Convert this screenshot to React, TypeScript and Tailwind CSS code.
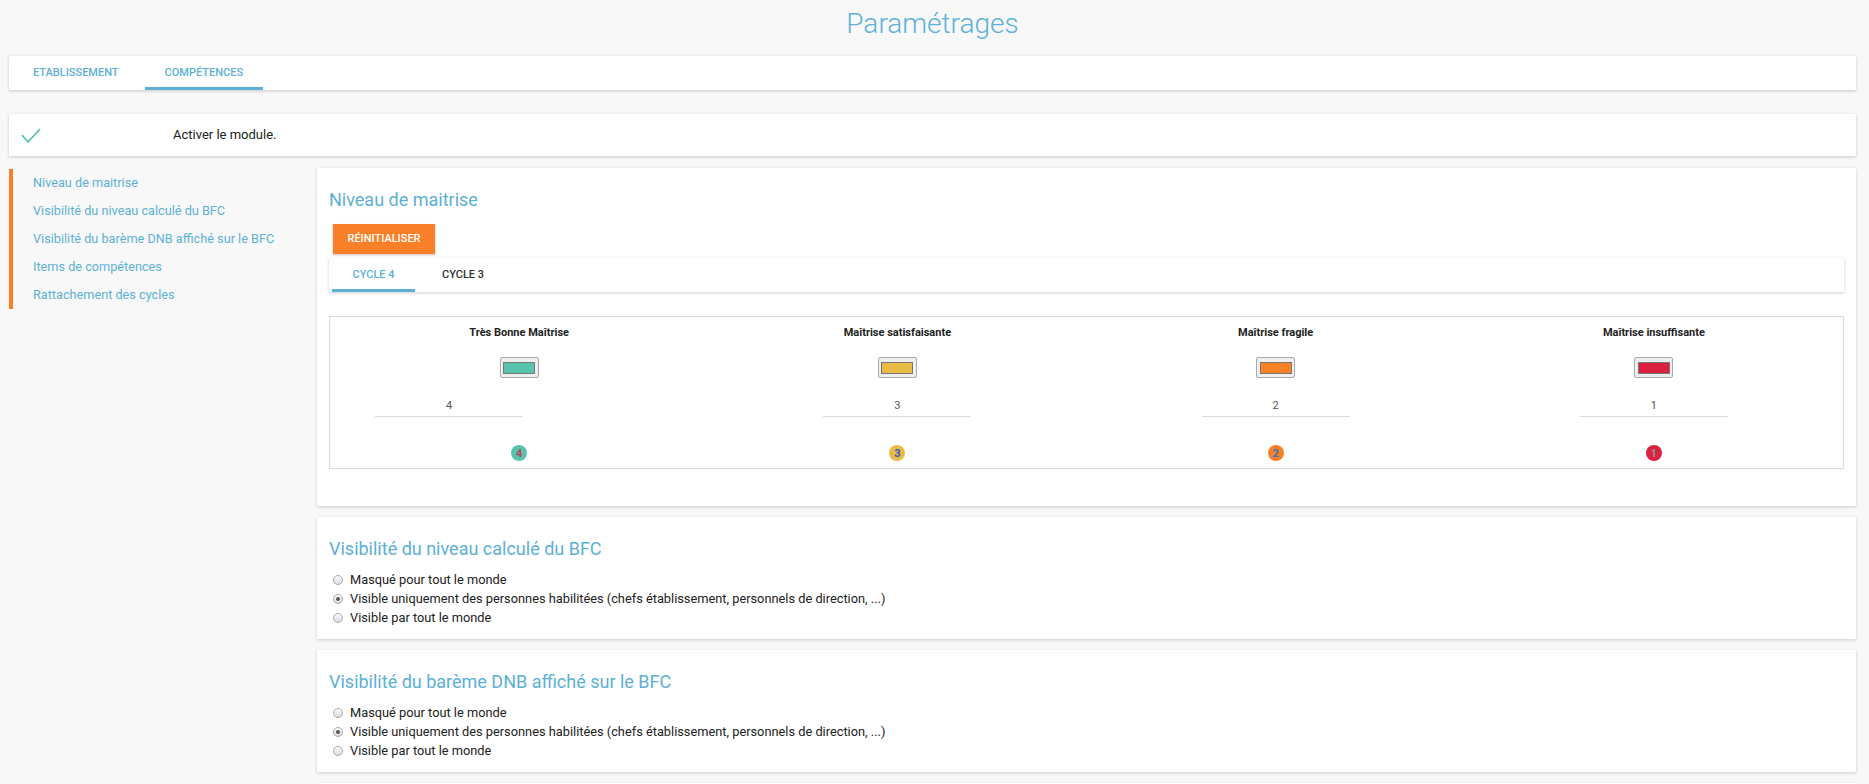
import React from 'react';

const levels = [
  { label: 'Très Bonne Maîtrise', color: '#57c4ad', value: '4', text: '#c2425a', shift: true },
  { label: 'Maîtrise satisfaisante', color: '#e8bb45', value: '3', text: '#2e57c8', shift: false },
  { label: 'Maîtrise fragile', color: '#f98024', value: '2', text: '#2c77d4', shift: false },
  { label: 'Maîtrise insuffisante', color: '#dc2140', value: '1', text: '#7c9c92', shift: false },
];

const options = [
  'Masqué pour tout le monde',
  'Visible uniquement des personnes habilitées (chefs établissement, personnels de direction, ...)',
  'Visible par tout le monde',
];

const Radio: React.FC<{ checked?: boolean; label: string }> = ({ checked, label }) => (
  <label className="flex items-center gap-[7px] leading-[19px] text-[12.8px] text-[#222]">
    <span className="ml-[4px] w-[10px] h-[10px] rounded-full border border-[#a8a8a8] bg-gradient-to-b from-[#fdfdfd] to-[#dcdcdc] flex items-center justify-center">
      {checked && <span className="w-[4px] h-[4px] rounded-full bg-[#555]" />}
    </span>
    {label}
  </label>
);

const VisibilityCard: React.FC<{ title: string }> = ({ title }) => (
  <section className="bg-white shadow-[0_1px_3px_rgba(0,0,0,0.18)] pt-[19px] pb-[12px] px-3">
    <h2 className="text-[18px] leading-[26px] text-[#5cb0d6]">{title}</h2>
    <div className="mt-[8px] flex flex-col">
      {options.map((o, i) => (
        <Radio key={o} label={o} checked={i === 1} />
      ))}
    </div>
  </section>
);

export default function App() {
  return (
    <div className="min-h-screen bg-[#f8f8f8] pl-[9px] pr-[13px] font-['Roboto',sans-serif]">
      <h1 className="h-[56px] pt-[4px] text-center text-[28px] leading-[40px] font-light text-[#5cb1d8]">
        Paramétrages
      </h1>

      {/* Top tabs */}
      <nav className="h-[34px] bg-white shadow-[0_1px_3px_rgba(0,0,0,0.2)] flex text-[11px] font-medium text-[#5cb0d6] uppercase">
        <a href="#" className="pl-[24px] pr-[26px] flex items-center">Etablissement</a>
        <a href="#" className="px-[20px] flex items-center border-b-[3px] border-[#5cb0d6] pt-[3px]">Compétences</a>
      </nav>

      {/* Module activation */}
      <div className="mt-[24px] h-[42px] bg-white shadow-[0_1px_3px_rgba(0,0,0,0.2)] flex items-center">
        <div className="w-[154px] pl-[12px] shrink-0">
          <svg width="20" height="15" viewBox="0 0 20 15" fill="none">
            <polyline points="1,7 7,14 19,1" stroke="#4fc1a6" strokeWidth="1.6" />
          </svg>
        </div>
        <span className="pl-[10px] text-[13px] text-[#222]">Activer le module.</span>
      </div>

      <div className="mt-[12px] flex items-start pb-[12px]">
        {/* Side menu */}
        <ul className="w-[308px] shrink-0 mt-[1px] border-l-4 border-[#f97f28] text-[12.7px] text-[#5cb0d6]">
          <li className="pl-[20px] leading-[28px]">Niveau de maitrise</li>
          <li className="pl-[20px] leading-[28px]">Visibilité du niveau calculé du BFC</li>
          <li className="pl-[20px] leading-[28px]">Visibilité du barème DNB affiché sur le BFC</li>
          <li className="pl-[20px] leading-[28px]">Items de compétences</li>
          <li className="pl-[20px] leading-[28px]">Rattachement des cycles</li>
        </ul>

        <div className="flex-1 flex flex-col gap-[11px]">
          <section className="bg-white shadow-[0_1px_3px_rgba(0,0,0,0.18)] pt-[19px] pb-[37px] px-3">
            <h2 className="text-[18px] leading-[26px] text-[#5cb0d6]">Niveau de maitrise</h2>
            <button className="mt-[11px] ml-[4px] h-[30px] w-[102px] bg-[#f97f28] text-white text-[11px] font-medium uppercase shadow-[0_1px_2px_rgba(0,0,0,0.25)]">
              Réinitialiser
            </button>

            <div className="mt-[4px] h-[34px] bg-white shadow-[0_1px_3px_rgba(0,0,0,0.2)] flex text-[11px] font-medium uppercase">
              <span className="ml-[3px] w-[83px] flex items-center justify-center text-[#5cb0d6] border-b-[3px] border-[#5cb0d6] pt-[3px]">
                Cycle 4
              </span>
              <span className="pl-[27px] flex items-center text-[#333]">Cycle 3</span>
            </div>

            <div className="mt-[24px] border border-[#dcdcdc] grid grid-cols-4 pt-[9px] pb-[7px]">
              {levels.map((l) => (
                <div key={l.label} className="flex flex-col items-center">
                  <div className="text-[11px] leading-[14px] font-bold text-[#222]">{l.label}</div>
                  <div className="mt-[17px] w-[39px] h-[21px] border border-[#a9a9a9] bg-[#efefef] rounded-[2px] flex items-center justify-center">
                    <div className="w-[32px] h-[12px] border border-[#777]" style={{ backgroundColor: l.color }} />
                  </div>
                  <div
                    className={`mt-[11px] w-[148px] h-[28px] pt-[8px] border-b border-[#dcdcdc] text-center text-[11px] leading-[18px] text-[#555] ${
                      l.shift ? 'mr-[140px]' : ''
                    }`}
                  >
                    {l.value}
                  </div>
                  <div
                    className="mt-[28px] w-4 h-4 rounded-full flex items-center justify-center text-[11px] font-bold leading-none"
                    style={{ backgroundColor: l.color, color: l.text }}
                  >
                    {l.value}
                  </div>
                </div>
              ))}
            </div>
          </section>

          <VisibilityCard title="Visibilité du niveau calculé du BFC" />
          <VisibilityCard title="Visibilité du barème DNB affiché sur le BFC" />
          <section className="bg-white shadow-[0_1px_3px_rgba(0,0,0,0.18)] h-[40px]" />
        </div>
      </div>
    </div>
  );
}
